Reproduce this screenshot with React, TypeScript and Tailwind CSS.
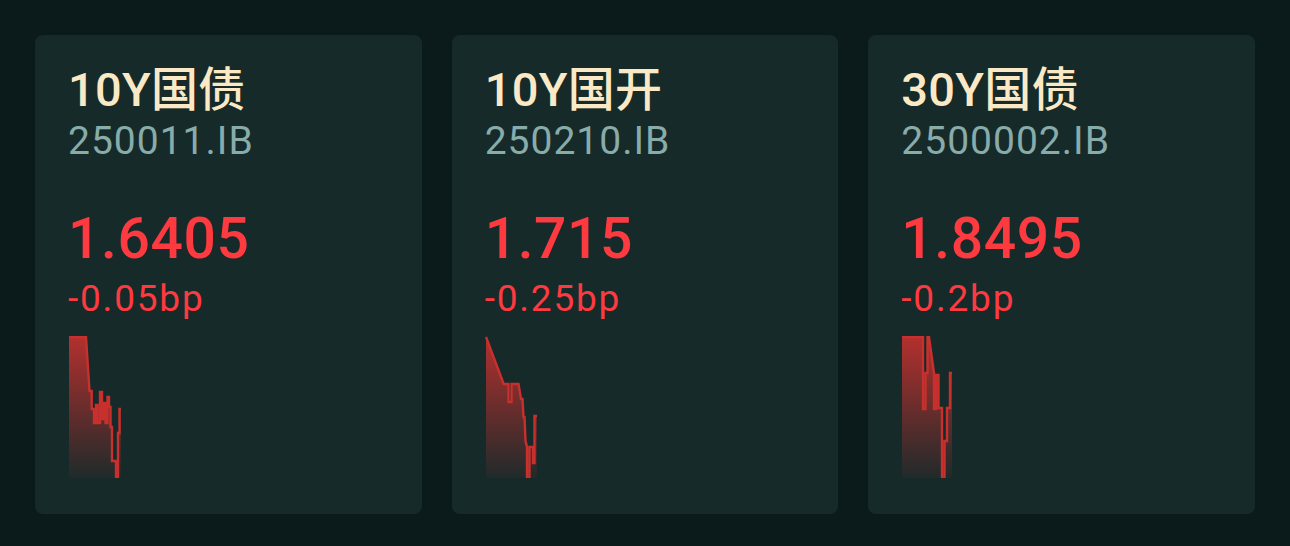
import React from "react";

type Card = {
  name: string;
  code: string;
  value: string;
  change: string;
  pts: [number, number][];
};

const c1: [number, number][] = [
  [0, 0], [17, 0], [20.5, 54], [22.7, 54], [22.7, 72], [25, 72], [25, 86], [27, 86], [27, 68], [28.5, 68], [28.5, 86],
  [31, 86], [31, 55], [33, 55], [33, 82], [35, 82], [35, 66], [36.5, 66], [36.5, 86], [38.5, 86], [38.5, 60],
  [40, 60], [40, 70], [41.5, 70], [41.5, 90], [43, 90], [43, 124], [47, 124], [47, 141], [49, 141], [49, 96],
  [50.5, 96], [50.5, 72], [52, 72],
];

const c2: [number, number][] = [
  [0, 0], [17.7, 47], [22.5, 47], [22.5, 65], [25.5, 65], [25.5, 47], [32.5, 47], [35, 62], [36.5, 62], [37.5, 80],
  [38.5, 80], [39.5, 104], [41, 110], [41, 142], [43.5, 142], [43.5, 110], [47, 110], [47, 126], [48.5, 126],
  [48.5, 79], [51, 79],
];

const c3: [number, number][] = [
  [0, 0], [21, 0], [21, 72], [23.5, 72], [23.5, 36], [25.5, 36], [25.5, 0], [27, 0], [32, 36], [32, 72],
  [34, 72], [34, 38], [36.5, 38], [36.5, 71], [40, 71], [40, 142], [42.5, 142], [42.5, 104], [45, 104],
  [45, 71], [48, 71], [48, 36], [50, 36],
];

const cards: Card[] = [
  { name: "10Y国债", code: "250011.IB", value: "1.6405", change: "-0.05bp", pts: c1 },
  { name: "10Y国开", code: "250210.IB", value: "1.715", change: "-0.25bp", pts: c2 },
  { name: "30Y国债", code: "2500002.IB", value: "1.8495", change: "-0.2bp", pts: c3 },
];

function Spark({ pts, id }: { pts: [number, number][]; id: string }) {
  const H = 142;
  const line = pts.map((p, i) => `${i === 0 ? "M" : "L"}${p[0] + 1},${p[1] + 1}`).join(" ");
  const last = pts[pts.length - 1];
  const area = `${line} L${last[0] + 1},${H} L1,${H} Z`;
  return (
    <svg width="60" height={H} viewBox={`0 0 60 ${H}`} className="block">
      <defs>
        <linearGradient id={id} x1="0" y1="0" x2="0" y2="1">
          <stop offset="0" stopColor="#b3302e" stopOpacity="1" />
          <stop offset="1" stopColor="#b3302e" stopOpacity="0.06" />
        </linearGradient>
      </defs>
      <path d={area} fill={`url(#${id})`} />
      <path d={line} fill="none" stroke="#c8302d" strokeWidth="2.4" strokeLinejoin="miter" />
    </svg>
  );
}

export default function App() {
  return (
    <div
      className="w-[1290px] h-[546px] bg-[#0b1a1a] px-[35px] pt-[35px] pb-[32px]"
      style={{ fontFamily: "Roboto, 'Noto Sans CJK SC', sans-serif" }}
    >
      <div className="grid grid-cols-3 gap-[30px] h-full">
        {cards.map((c, i) => (
          <div key={i} className="bg-[#162a2a] rounded-[8px] pl-[33px] pt-[31px] flex flex-col">
            <div className="text-[47px] leading-none font-medium tracking-[0.3px] text-[#fbe9c6]">{c.name}</div>
            <div className="mt-[9px] text-[39px] leading-none tracking-[1px] text-[#88aca9]">{c.code}</div>
            <div className="mt-[49px] text-[57px] leading-none font-medium tracking-[0.6px] text-[#fd3a40]">{c.value}</div>
            <div className="mt-[13px] text-[37px] leading-none tracking-[1.8px] text-[#fd3a40]">{c.change}</div>
            <div className="mt-[19px]">
              <Spark pts={c.pts} id={`g${i}`} />
            </div>
          </div>
        ))}
      </div>
    </div>
  );
}
